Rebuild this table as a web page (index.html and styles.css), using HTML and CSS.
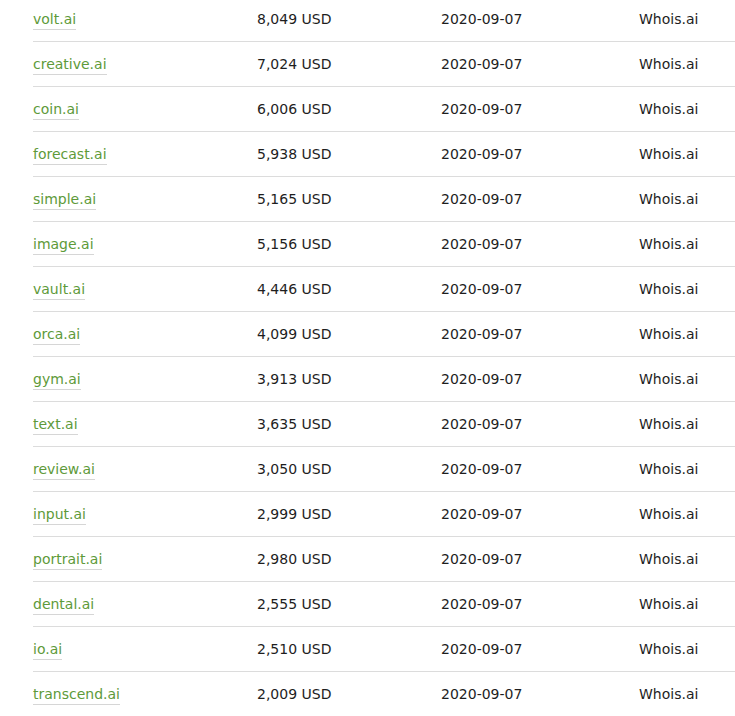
FILE: index.html
```html
<!DOCTYPE html>
<html>
<head>
<meta charset="utf-8">
<link rel="stylesheet" href="styles.css">
</head>
<body>
<div class="sales">
  <div class="row"><div><a class="domain" href="#">volt.ai</a></div><div>8,049 USD</div><div>2020-09-07</div><div>Whois.ai</div></div>
  <div class="row"><div><a class="domain" href="#">creative.ai</a></div><div>7,024 USD</div><div>2020-09-07</div><div>Whois.ai</div></div>
  <div class="row"><div><a class="domain" href="#">coin.ai</a></div><div>6,006 USD</div><div>2020-09-07</div><div>Whois.ai</div></div>
  <div class="row"><div><a class="domain" href="#">forecast.ai</a></div><div>5,938 USD</div><div>2020-09-07</div><div>Whois.ai</div></div>
  <div class="row"><div><a class="domain" href="#">simple.ai</a></div><div>5,165 USD</div><div>2020-09-07</div><div>Whois.ai</div></div>
  <div class="row"><div><a class="domain" href="#">image.ai</a></div><div>5,156 USD</div><div>2020-09-07</div><div>Whois.ai</div></div>
  <div class="row"><div><a class="domain" href="#">vault.ai</a></div><div>4,446 USD</div><div>2020-09-07</div><div>Whois.ai</div></div>
  <div class="row"><div><a class="domain" href="#">orca.ai</a></div><div>4,099 USD</div><div>2020-09-07</div><div>Whois.ai</div></div>
  <div class="row"><div><a class="domain" href="#">gym.ai</a></div><div>3,913 USD</div><div>2020-09-07</div><div>Whois.ai</div></div>
  <div class="row"><div><a class="domain" href="#">text.ai</a></div><div>3,635 USD</div><div>2020-09-07</div><div>Whois.ai</div></div>
  <div class="row"><div><a class="domain" href="#">review.ai</a></div><div>3,050 USD</div><div>2020-09-07</div><div>Whois.ai</div></div>
  <div class="row"><div><a class="domain" href="#">input.ai</a></div><div>2,999 USD</div><div>2020-09-07</div><div>Whois.ai</div></div>
  <div class="row"><div><a class="domain" href="#">portrait.ai</a></div><div>2,980 USD</div><div>2020-09-07</div><div>Whois.ai</div></div>
  <div class="row"><div><a class="domain" href="#">dental.ai</a></div><div>2,555 USD</div><div>2020-09-07</div><div>Whois.ai</div></div>
  <div class="row"><div><a class="domain" href="#">io.ai</a></div><div>2,510 USD</div><div>2020-09-07</div><div>Whois.ai</div></div>
  <div class="row"><div><a class="domain" href="#">transcend.ai</a></div><div>2,009 USD</div><div>2020-09-07</div><div>Whois.ai</div></div>
</div>
</body>
</html>
```
FILE: styles.css
```css
html, body {
  margin: 0;
  padding: 0;
  background: #fff;
}
body {
  font-family: "DejaVu Sans", Verdana, sans-serif;
  font-size: 14px;
  color: #1e1e1e;
  overflow: hidden;
}
.sales {
  margin-top: -3px;
  padding-left: 33px;
}
.row {
  display: grid;
  grid-template-columns: 224px 184px 198px 1fr;
  align-items: center;
  height: 44px;
  border-bottom: 1px solid #dcdcdc;
  line-height: 17px;
}
.domain {
  color: #5e9a3a;
  text-decoration: none;
  border-bottom: 1px solid #d6d6d6;
  padding-bottom: 2px;
}
```
